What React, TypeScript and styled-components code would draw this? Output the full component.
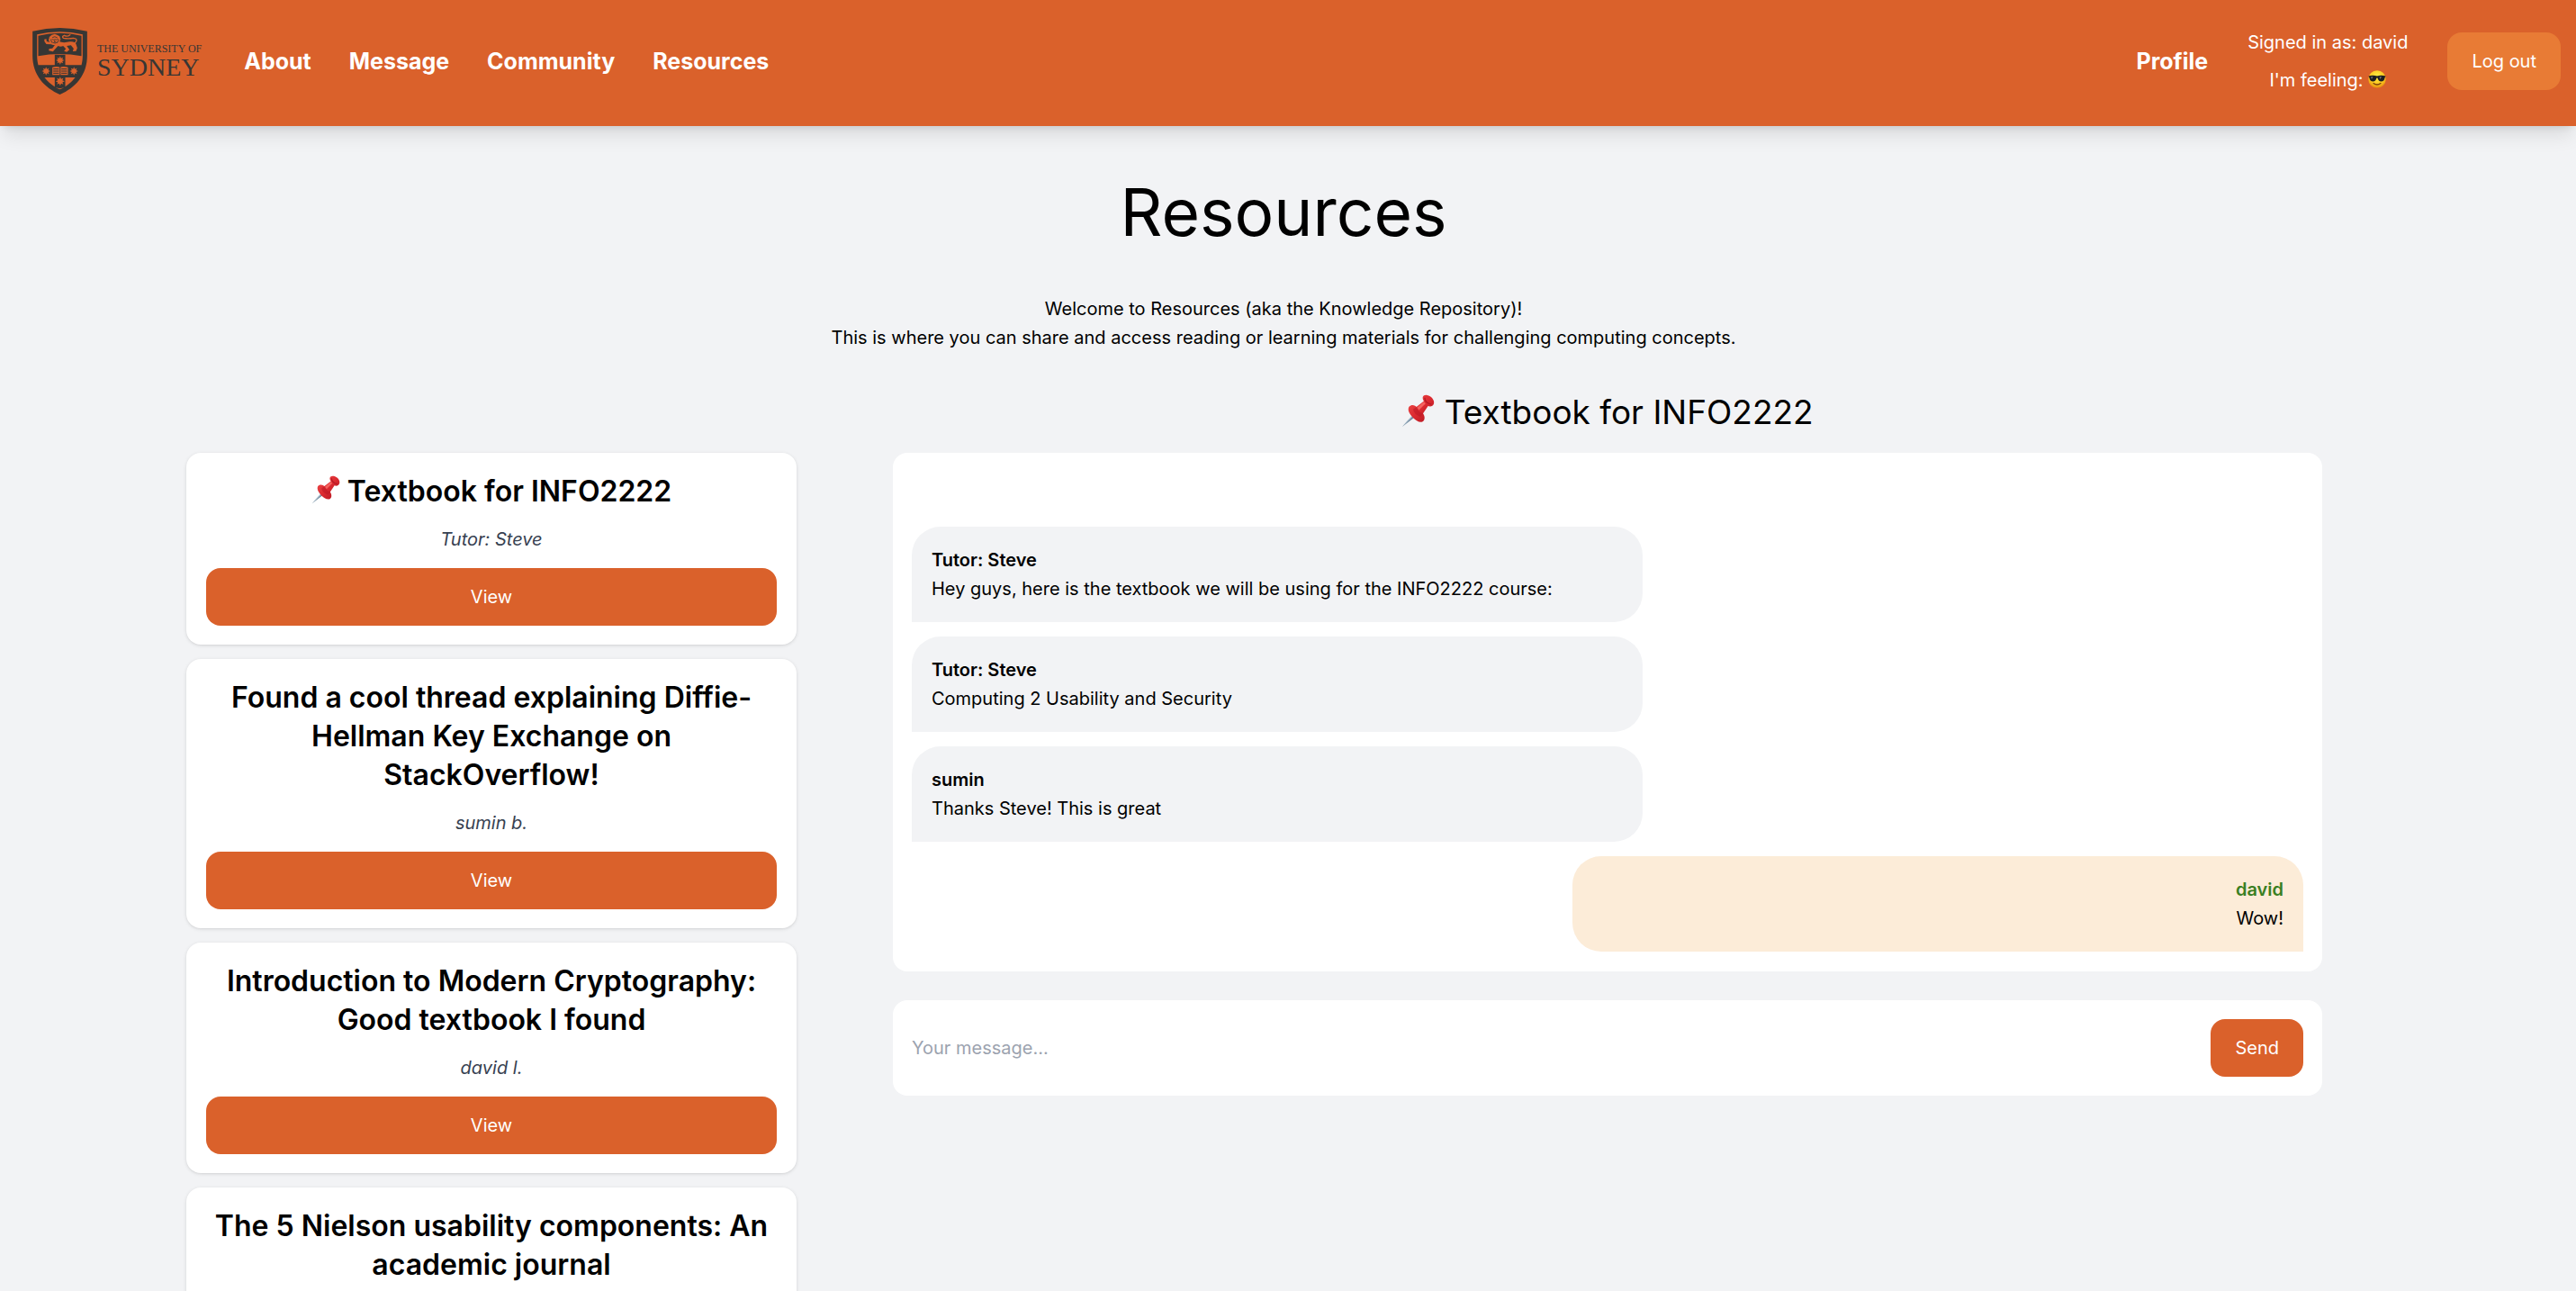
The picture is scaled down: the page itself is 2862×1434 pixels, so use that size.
import React from "react";
import styled, { createGlobalStyle, css } from "styled-components";

const colors = {
  brand: "#da612b",
  brandLight: "#e87b35",
  page: "#f2f3f5",
  bubble: "#f2f3f5",
  ownBubble: "#fcecd8",
  ownName: "#3a7f22",
  crest: "#373634",
};

const GlobalStyle = createGlobalStyle`
  *, *::before, *::after { box-sizing: border-box; }
  body {
    margin: 0;
    background: ${colors.page};
    color: #000;
    font-family: Inter, "Liberation Sans", sans-serif;
    font-size: 20px;
    line-height: 32px;
  }
  h1, h2, h3, p, ul { margin: 0; padding: 0; font-weight: 400; }
  ul { list-style: none; }
  button, input { font: inherit; }
`;

const Page = styled.div`
  height: 100vh;
  overflow: hidden;
`;

const Header = styled.header`
  position: relative;
  display: flex;
  align-items: center;
  justify-content: space-between;
  height: 140px;
  padding: 0 17px 4px 36px;
  background: ${colors.brand};
  color: #fff;
  box-shadow: 0 14px 20px -4px rgba(0, 0, 0, 0.1),
    0 6px 8px -5px rgba(0, 0, 0, 0.1);
`;

const Nav = styled.nav`
  display: flex;
  align-items: center;
  gap: 42px;
`;

const Account = styled.div`
  display: flex;
  align-items: center;
  gap: 44px;
`;

const NavLink = styled.a`
  color: #fff;
  font-size: 25px;
  font-weight: 700;
  text-decoration: none;
`;

const LogoLink = styled.a`
  display: flex;
  align-items: center;
  gap: 11px;
  margin-right: 5px;
  color: ${colors.crest};
  font-family: "Liberation Serif", serif;
  text-decoration: none;
`;

const LogoText = styled.span`
  display: flex;
  flex-direction: column;
`;

const LogoSmall = styled.span`
  font-size: 12px;
  line-height: 14px;
  white-space: nowrap;
`;

const LogoBig = styled.span`
  font-size: 28px;
  line-height: 28px;
`;

const Status = styled.div`
  display: flex;
  flex-direction: column;
  align-items: center;
  gap: 10px;
`;

const Button = styled.button<{ $light?: boolean; $block?: boolean }>`
  height: 64px;
  padding: 0 27px;
  border: 0;
  border-radius: 16px;
  background: ${(p) => (p.$light ? colors.brandLight : colors.brand)};
  color: #fff;
  cursor: pointer;
  ${(p) =>
    p.$block &&
    css`
      width: 100%;
    `}
`;

const Main = styled.main`
  padding: 48px 217px 0 207px;
`;

const Title = styled.h1`
  font-size: 73px;
  line-height: 96px;
  text-align: center;
`;

const Intro = styled.p`
  margin-top: 43px;
  text-align: center;
`;

const Columns = styled.div`
  display: grid;
  grid-template-columns: 678fr 1588fr;
  gap: 107px;
  padding: 40px 65px 0 0;
`;

const CardList = styled.ul`
  display: flex;
  flex-direction: column;
  gap: 16px;
  padding-top: 72px;
`;

const Card = styled.li`
  display: flex;
  flex-direction: column;
  gap: 16px;
  padding: 21px 22px;
  border-radius: 16px;
  background: #fff;
  text-align: center;
  box-shadow: 0 1px 4px rgba(0, 0, 0, 0.1), 0 1px 3px -1px rgba(0, 0, 0, 0.1);
`;

const CardTitle = styled.h3`
  font-size: 32px;
  font-weight: 600;
  line-height: 43px;
`;

const Author = styled.p`
  min-height: 32px;
  color: #374151;
  font-style: italic;
`;

const Thread = styled.section`
  display: flex;
  flex-direction: column;
`;

const ThreadTitle = styled.h2`
  margin-bottom: 18px;
  font-size: 37px;
  line-height: 54px;
  text-align: center;
`;

const Messages = styled.ul`
  display: flex;
  flex-direction: column;
  gap: 16px;
  padding: 82px 21px 22px;
  border-radius: 16px;
  background: #fff;
`;

const Bubble = styled.li<{ $own: boolean }>`
  align-self: ${(p) => (p.$own ? "flex-end" : "flex-start")};
  width: 52.5%;
  padding: 21px 22px;
  border-radius: ${(p) => (p.$own ? "32px 32px 0 32px" : "32px 32px 32px 0")};
  background: ${(p) => (p.$own ? colors.ownBubble : colors.bubble)};
  text-align: ${(p) => (p.$own ? "right" : "left")};
`;

const Sender = styled.p<{ $own: boolean }>`
  color: ${(p) => (p.$own ? colors.ownName : "#000")};
  font-weight: 600;
`;

const Composer = styled.form`
  display: flex;
  align-items: center;
  gap: 21px;
  margin-top: 32px;
  padding: 21px;
  border-radius: 16px;
  background: #fff;
`;

const MessageInput = styled.input`
  flex: 1;
  min-width: 0;
  height: 64px;
  padding: 0;
  border: 0;
  outline: 0;
  background: transparent;
  &::placeholder {
    color: #9ca3af;
    opacity: 1;
  }
`;

const Emoji = styled.svg`
  display: inline-block;
  width: 1em;
  height: 1em;
  vertical-align: -0.1em;
`;

const star = (cx: number, cy: number, r: number) =>
  Array.from({ length: 16 }, (_, i) => {
    const a = (i * Math.PI) / 8 - Math.PI / 2;
    const d = i % 2 ? r * 0.55 : r;
    return `${(cx + d * Math.cos(a)).toFixed(1)},${(cy + d * Math.sin(a)).toFixed(1)}`;
  }).join(" ");

function Crest() {
  return (
    <svg width="61" height="74" viewBox="0 0 182 222" aria-hidden="true">
      <path d="M0 11Q91-11 182 11V92C182 158 142 199 91 222C40 199 0 158 0 92Z" fill={colors.crest} />
      <path d="M15 22Q91 4 167 22V92C167 149 131 186 91 205C51 186 15 149 15 92Z" fill={colors.brand} />
      <path d="M19 26Q91 9 163 26V94Q91 80 19 94Z" fill={colors.crest} />
      <path d="M74 89H109V198L91 202L74 198ZM18 124H164Q163 146 155 165H27Q19 146 18 124Z" fill={colors.crest} />
      <g fill={colors.brand}>
        <polygon points={star(92, 108, 14)} />
        <polygon points={star(45, 144, 14)} />
        <polygon points={star(138, 144, 14)} />
        <polygon points={star(92, 178, 15)} />
        <path d="M66 131Q80 127 91 131Q103 127 118 131V157H66Z" />
      </g>
      <path d="M92 130V158M69 137H88M69 144H88M69 151H88M96 137H115M96 144H115M96 151H115" stroke={colors.crest} strokeWidth="3" />
      <g fill={colors.brand}>
        <path d="M74 20L82 23L90 28L93 37L91 46L84 54L75 58L65 56L57 50L54 40L56 30L64 23Z" />
        <path d="M88 46Q104 51 124 46Q141 44 145 54L149 67L145 77L134 78L137 69L128 58L114 60L123 73L114 80L105 77L111 70L102 60Q94 64 85 60L76 70L68 79L54 76L55 70L66 68L75 56Z" />
        <path d="M59 48L47 45L46 37L39 38L40 46L46 54L63 55Z" />
      </g>
      <path d="M142 50Q154 36 136 34Q119 37 103 34Q96 29 106 25Q116 31 125 23" fill="none" stroke={colors.brand} strokeWidth="4" strokeLinecap="round" />
      <path d="M66 32Q74 26 83 33M66 38L71 40M78 40L83 38M75 36L73 47H78M67 48Q75 55 83 47M62 37Q60 44 66 50M86 37Q88 44 82 50" fill="none" stroke={colors.crest} strokeWidth="2.5" />
    </svg>
  );
}

function Pushpin() {
  return (
    <Emoji viewBox="0 0 40 40" role="img" aria-label="pushpin">
      <defs>
        <linearGradient id="pinRed" x1="0" y1="0" x2="1" y2="1">
          <stop offset="0" stopColor="#f0514f" />
          <stop offset="0.5" stopColor="#dc2a30" />
          <stop offset="1" stopColor="#a9131f" />
        </linearGradient>
      </defs>
      <path d="M1 39L16 22L19 25Z" fill="#6f889d" />
      <path d="M1 39L16 22L17 23Z" fill="#c5d8e4" />
      <path d="M9 15C13 11 17 14 18 15L27 8C24 4 26 0 31 1C36 2 40 7 39 11C38 15 34 15 32 14L26 23C29 27 28 32 25 33C21 34 17 31 14 28C10 24 7 19 9 15Z" fill="url(#pinRed)" />
      <path d="M18 15Q20 21 26 23L23 27Q15 24 14 18Z" fill="#b91724" opacity=".55" />
      <path d="M28 4Q28 10 36 12" fill="none" stroke="#b51a25" strokeWidth="1.5" />
      <path d="M19 16L27 9L29 11L21 19Z" fill="#ff7a74" opacity=".7" />
    </Emoji>
  );
}

function CoolFace() {
  return (
    <Emoji viewBox="0 0 40 40" role="img" aria-label="smiling face with sunglasses">
      <defs>
        <radialGradient id="face" cx=".5" cy=".35" r=".65">
          <stop offset="0" stopColor="#fff04a" />
          <stop offset="0.65" stopColor="#fcc71d" />
          <stop offset="1" stopColor="#e58a10" />
        </radialGradient>
      </defs>
      <circle cx="20" cy="20" r="19.5" fill="url(#face)" />
      <path d="M1 13Q11 10 20 13Q29 10 39 13L37 17Q36 25 29 25Q23 25 21 17H19Q17 25 11 25Q4 25 3 17Z" fill="#1d1d1f" />
      <path d="M6 15L11 14L8 20ZM25 15L30 14L27 20Z" fill="#77797d" />
      <path d="M12 29Q20 35 28 29" fill="none" stroke="#7b3d0c" strokeWidth="2.5" strokeLinecap="round" />
    </Emoji>
  );
}

type Resource = { title: string; author?: string; pinned?: boolean };

const resources: Resource[] = [
  { title: "Textbook for INFO2222", author: "Tutor: Steve", pinned: true },
  { title: "Found a cool thread explaining Diffie-Hellman Key Exchange on StackOverflow!", author: "sumin b." },
  { title: "Introduction to Modern Cryptography: Good textbook I found", author: "david l." },
  { title: "The 5 Nielson usability components: An academic journal" },
];

const messages = [
  { sender: "Tutor: Steve", text: "Hey guys, here is the textbook we will be using for the INFO2222 course:", own: false },
  { sender: "Tutor: Steve", text: "Computing 2 Usability and Security", own: false },
  { sender: "sumin", text: "Thanks Steve! This is great", own: false },
  { sender: "david", text: "Wow!", own: true },
];

export default function App() {
  return (
    <Page>
      <GlobalStyle />
      <Header>
        <Nav>
          <LogoLink href="#">
            <Crest />
            <LogoText>
              <LogoSmall>THE UNIVERSITY OF</LogoSmall>
              <LogoBig>SYDNEY</LogoBig>
            </LogoText>
          </LogoLink>
          {["About", "Message", "Community", "Resources"].map((name) => (
            <NavLink key={name} href="#">{name}</NavLink>
          ))}
        </Nav>
        <Account>
          <NavLink href="#">Profile</NavLink>
          <Status>
            <span>Signed in as: david</span>
            <span>I'm feeling: <CoolFace /></span>
          </Status>
          <Button type="button" $light>Log out</Button>
        </Account>
      </Header>
      <Main>
        <Title>Resources</Title>
        <Intro>
          Welcome to Resources (aka the Knowledge Repository)!
          <br />
          This is where you can share and access reading or learning materials for challenging computing concepts.
        </Intro>
        <Columns>
          <CardList>
            {resources.map((r) => (
              <Card key={r.title}>
                <CardTitle>
                  {r.pinned && <><Pushpin />{" "}</>}
                  {r.title}
                </CardTitle>
                <Author>{r.author}</Author>
                <Button type="button" $block>View</Button>
              </Card>
            ))}
          </CardList>
          <Thread>
            <ThreadTitle><Pushpin /> Textbook for INFO2222</ThreadTitle>
            <Messages>
              {messages.map((m) => (
                <Bubble key={m.text} $own={m.own}>
                  <Sender $own={m.own}>{m.sender}</Sender>
                  <p>{m.text}</p>
                </Bubble>
              ))}
            </Messages>
            <Composer onSubmit={(e) => e.preventDefault()}>
              <MessageInput aria-label="Your message" placeholder="Your message..." />
              <Button type="submit">Send</Button>
            </Composer>
          </Thread>
        </Columns>
      </Main>
    </Page>
  );
}
